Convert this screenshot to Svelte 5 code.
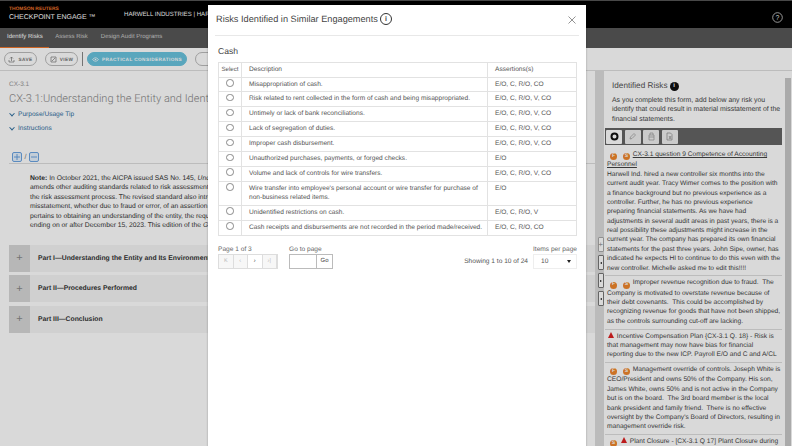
<script>
  const rows = [
    ['Misappropriation of cash.', 'E/O, C, R/O, CO'],
    ['Risk related to rent collected in the form of cash and being misappropriated.', 'E/O, C, R/O, V, CO'],
    ['Untimely or lack of bank reconciliations.', 'E/O, C, R/O, V, CO'],
    ['Lack of segregation of duties.', 'E/O, C, R/O, V, CO'],
    ['Improper cash disbursement.', 'E/O, C, R/O, V, CO'],
    ['Unauthorized purchases, payments, or forged checks.', 'E/O'],
    ['Volume and lack of controls for wire transfers.', 'E/O, C, R/O, V, CO'],
    ['Wire transfer into employee\'s personal account or wire transfer for purchase of non-business related items.', 'E/O'],
    ['Unidentified restrictions on cash.', 'E/O, C, R/O, V'],
    ['Cash receipts and disbursements are not recorded in the period made/received.', 'E/O, C, R/O, CO']
  ];
  const parts = ['Part I—Understanding the Entity and Its Environment', 'Part II—Procedures Performed', 'Part III—Conclusion'];
  const noteLines = [
    ' In October 2021, the AICPA issued SAS No. 145, ',
    'amends other auditing standards related to risk assessment. The revised standard',
    'the risk assessment process. The revised standard also introduces',
    'misstatement, whether due to fraud or error, of an assertion about',
    'pertains to obtaining an understanding of the entity, the requirements',
    'ending on or after December 15, 2023. This edition of the '
  ];
</script>

<div class="page">
  <header class="top">
    <div class="brand">
      <div class="tr">THOMSON REUTERS</div>
      <div class="ce">CHECKPOINT ENGAGE ™</div>
    </div>
    <div class="client">HARWELL INDUSTRIES | HARWELL INDUSTRIES</div>
    <svg class="help" width="11" height="11" viewBox="0 0 11 11"><circle cx="5.5" cy="5.5" r="4.8" fill="none" stroke="#ddd" stroke-width=".8"/><text x="5.5" y="8" text-anchor="middle" font-size="7" fill="#ddd" font-family="Liberation Sans">?</text></svg>
  </header>
  <nav class="tabs">
    <span class="tab active">Identify Risks</span>
    <span class="tab">Assess Risk</span>
    <span class="tab">Design Audit Programs</span>
  </nav>
  <div class="toolbar">
    <span class="pill"><svg width="7" height="7" viewBox="0 0 7 7"><path d="M1 4v2h5V4M3.5 5V1M2 2.5 3.5 1 5 2.5" fill="none" stroke="#777" stroke-width=".7"/></svg>SAVE</span>
    <span class="pill"><svg width="7" height="7" viewBox="0 0 7 7"><path d="M1 1h5v5H1zM2 5l3-3" fill="none" stroke="#777" stroke-width=".7"/></svg>VIEW</span>
    <span class="sep"></span>
    <span class="pill teal"><svg width="7" height="7" viewBox="0 0 7 7"><path d="M.5 3.5Q3.5 0 6.500 3.500 3.500 7 .5 3.500Z" fill="none" stroke="#fff" stroke-width=".7"/><circle cx="3.500" cy="3.500" r=".8" fill="#fff"/></svg>PRACTICAL CONSIDERATIONS</span>
    <span class="pill"><svg width="7" height="7" viewBox="0 0 7 7"><path d="M1 4v2h5V4M3.5 5V1" fill="none" stroke="#777" stroke-width=".7"/></svg>EXPORT</span>
  </div>
  <div class="work">
    <main class="main">
      <div class="crumb">CX-3.1</div>
      <h1>CX-3.1:Understanding the Entity and Identifying Risks</h1>
      <div class="link"><span class="chev"></span>Purpose/Usage Tip</div>
      <div class="link"><span class="chev"></span>Instructions</div>
      <div class="expand">
        <svg class="box" width="10" height="10" viewBox="0 0 10 10"><rect x=".5" y=".5" width="9" height="9" rx="1.500"/><path d="M5 2v6M2 5h6"/></svg>
        <span class="slash">/</span>
        <svg class="box" width="10" height="10" viewBox="0 0 10 10"><rect x=".5" y=".5" width="9" height="9" rx="1.500"/><path d="M2 5h6"/></svg>
      </div>
      <div class="note">
        {#each noteLines as line, i}
          <div>{#if i === 0}<b>Note:</b>{/if}{line}{#if i === 0}<i>Understanding</i>{/if}{#if i === 5}<i>Guide</i>{/if}</div>
        {/each}
      </div>
      <div class="parts">
        {#each parts as p}
          <div class="part"><span class="plus">+</span><span class="ptitle">{p}</span></div>
        {/each}
      </div>
    </main>
    <div class="split">
      <span class="sbtn wide">+</span>
      <span class="sbtn"><i class="tri left"></i></span>
      <span class="sbtn"><i class="tri"></i></span>
      <span class="sbtn"><i class="tri left"></i></span>
    </div>
    <aside class="side">
      <div class="stitle">Identified Risks <span class="info">i</span></div>
      <p class="intro">As you complete this form, add below any risk you<br>identify that could result in material misstatement of the<br>financial statements.</p>
      <div class="sbar">
        <span class="tool on"><svg width="9" height="9" viewBox="0 0 9 9"><circle cx="4.500" cy="4.500" r="3" fill="none" stroke="#111" stroke-width="2"/></svg></span>
        <span class="tool"><svg width="9" height="9" viewBox="0 0 9 9"><path d="M2 7l.5-2L6 1.500 7.500 3 4 6.500z" fill="none" stroke="#999" stroke-width=".7"/></svg></span>
        <span class="tool"><svg width="9" height="9" viewBox="0 0 9 9"><path d="M2 3h5v5H2zM3 3V1h3v2M2 5h5" fill="none" stroke="#999" stroke-width=".7"/></svg></span>
        <span class="tool"><svg width="9" height="9" viewBox="0 0 9 9"><path d="M2 1h3.500L7 2.500V8H2zM4 4l2 3M4 7l2-3" fill="none" stroke="#888" stroke-width=".7"/></svg></span>
      </div>
      <div class="risk first">
        <div class="h"><span class="b">F</span> <span class="b">S</span> <u>CX-3.1 question 9 Competence of Accounting</u></div>
        <u>Personnel</u><br>
        Harwell Ind. hired a new controller six months into the<br>current audit year. Tracy Wimer comes to the position with<br>a finance background but no previous experience as a<br>controller. Further, he has no previous experience<br>preparing financial statements. As we have had<br>adjustments in several audit areas in past years, there is a<br>real possibility these adjustments might increase in the<br>current year. The company has prepared its own financial<br>statements for the past three years. John Sipe, owner, has<br>indicated he expects HI to continue to do this even with the<br>new controller. Michelle asked me to edit this!!!!
      </div>
      <div class="risk">
        <div class="h"><span class="b">F</span> <span class="b">S</span> Improper revenue recognition due to fraud.&nbsp; The</div>
        Company is motivated to overstate revenue because of<br>their debt covenants.&nbsp; This could be accomplished by<br>recognizing revenue for goods that have not been shipped,<br>as the controls surrounding cut-off are lacking.
      </div>
      <div class="risk">
        <div class="h"><span class="warn"></span> Incentive Compensation Plan {'{'}CX-3.1 Q. 18{'}'} - Risk is</div>
        that management may now have bias for financial<br>reporting due to the new ICP. Payroll E/O and C and A/CL
      </div>
      <div class="risk">
        <div class="h"><span class="b">F</span> <span class="b">S</span> Management override of controls. Joseph White is</div>
        CEO/President and owns 50% of the Company. His son,<br>James White, owns 50% and is not active in the Company<br>but is on the board.&nbsp; The 3rd board member is the local<br>bank president and family friend.&nbsp; There is no effective<br>oversight by the Company's Board of Directors, resulting in<br>management override risk.
      </div>
      <div class="risk">
        <div class="h"><span class="b">S</span> <span class="warn"></span> Plant Closure - [CX-3.1 Q 17] Plant Closure during</div>
      </div>
    </aside>
    <div class="scroll"><span class="thumb"></span></div>
  </div>
  <div class="backdrop"></div>
  <section class="modal">
    <div class="mhead">
      <span>Risks Identified in Similar Engagements</span>
      <span class="minfo">i</span>
      <svg class="close" width="8" height="8" viewBox="0 0 8 8"><path d="M.5.500l7 7M7.500.500l-7 7" stroke="#777" stroke-width=".8"/></svg>
    </div>
    <div class="mbody">
      <div class="cash">Cash</div>
      <table>
        <colgroup><col class="c1"><col class="c2"><col class="c3"></colgroup>
        <thead>
          <tr><th class="sel">Select</th><th>Description</th><th>Assertions(s)</th></tr>
        </thead>
        <tbody>
          {#each rows as r}
            <tr>
              <td class="sel"><span class="radio"></span></td>
              <td>{r[0]}</td>
              <td>{r[1]}</td>
            </tr>
          {/each}
        </tbody>
      </table>
      <div class="foot">
        <div class="fgroup">
          <div class="flabel">Page 1 of 3</div>
          <div class="pager">
            <span class="dis">K</span><span class="dis">‹</span><span>›</span><span class="dis">›|</span>
          </div>
        </div>
        <div class="fgroup goto">
          <div class="flabel">Go to page</div>
          <div class="goinput"><span class="field"></span><span class="go">Go</span></div>
        </div>
        <div class="showing">Showing 1 to 10 of 24</div>
        <div class="fgroup ipp">
          <div class="flabel">Items per page</div>
          <div class="select"><span>10</span><i></i></div>
        </div>
      </div>
    </div>
  </section>
</div>

<style>
  :global(body) { margin: 0; background: #fff; }
  .page {
    position: relative; width: 792px; height: 446px; overflow: hidden;
    font-family: "Liberation Sans", Arial, sans-serif; color: #333; font-size: 7.300px;
    display: flex; flex-direction: column; text-rendering: geometricPrecision;
  }
  .top {
    height: 28px; flex: none; background: #000; border-top: 1px solid #555; box-sizing: border-box;
    display: flex; align-items: center; padding: 0 0 0 9px; color: #fff;
  }
  .brand { width: 115px; }
  .tr { color: #f0772b; font-size: 4.900px; font-weight: bold; line-height: 6px; }
  .ce { font-size: 7px; line-height: 9px; }
  .client { font-size: 6.100px; white-space: nowrap; }
  .help { position: absolute; right: 9px; top: 12px; }
  .tabs {
    height: 20px; flex: none; background: #585858; display: flex; color: #ccc; font-size: 6px;
  }
  .tab { padding: 0 6.500px; line-height: 19px; }
  .tab:first-child { padding: 0 6px 0 7px; }
  .tab.active { color: #fff; box-shadow: inset 0 -1px 0 #f0772b; }
  .toolbar {
    height: 23px; flex: none; box-sizing: border-box; border-bottom: 1px solid #ddd; display: flex;
    align-items: center; padding: 0 4px; gap: 8px;
  }
  .pill {
    height: 14px; box-sizing: border-box; border: 1px solid #bbb; border-radius: 7px; display: flex;
    align-items: center; justify-content: center; gap: 3px; font-size: 4.700px; letter-spacing: .4px;
    font-weight: bold; color: #777; width: 33px; background: #fff;
  }
  .pill.teal { width: 100px; background: #69c3de; border-color: #69c3de; color: #fff; }
  .pill:last-child { width: 60px; }
  .sep { width: 1px; height: 14px; background: #888; margin: 0 -4px 0 -4px; }
  .work { flex: 1; min-height: 0; display: flex; }
  .main { width: 595px; flex: none; box-sizing: border-box; padding: 10px 0 0 9px; white-space: nowrap; overflow: hidden; }
  .crumb { font-size: 6.500px; color: #999; line-height: 8px; }
  h1 { margin: 2px 0 0; font-family: Roboto, sans-serif; font-weight: 300; font-size: 11px; color: #888; line-height: 15px; }
  .link { color: #2f6f9f; font-size: 6.600px; line-height: 14px; display: flex; align-items: center; gap: 2px; }
  h1 + .link { margin-top: 2px; }
  .chev { width: 3px; height: 3px; border-right: 1px solid #2f6f9f; border-bottom: 1px solid #2f6f9f; transform: rotate(45deg) translate(-1px,-1px); margin: 0 2px 0 1px; }
  .expand {
    margin-top: 16px; height: 12px; box-sizing: border-box; border-bottom: 1px solid #ddd; display: flex; align-items: flex-start; gap: 2.500px; padding-left: 3px;
  }
  .box { fill: #e6f1fd; stroke: #5c9ade; stroke-width: .9; }
  .slash { color: #777; line-height: 9px; }
  .note { margin: 10px 0 0 21px; font-size: 6.750px; line-height: 9.450px; color: #333; }
  .parts { margin-top: 14px; display: flex; flex-direction: column; gap: 3.500px; }
  .part { height: 27px; background: #f5f5f5; display: flex; align-items: center; }
  .plus { width: 21px; height: 100%; background: #d8d8d8; display: flex; align-items: center; justify-content: center; color: #888; font-size: 11px; }
  .ptitle { margin-left: 8px; font-weight: bold; font-size: 6.800px; color: #333; }
  .split { width: 9px; flex: none; background: #dcdcdc; display: flex; flex-direction: column; align-items: center; padding-top: 166px; gap: 3px; box-sizing: border-box; }
  .sbtn {
    position: relative; left: 1px; width: 6px; height: 15px; box-sizing: border-box; background: #fff; border: 1px solid #777; border-radius: 1px;
    display: flex; align-items: center; justify-content: center; font-size: 8px; color: #999;
  }
  .sbtn.wide { border-color: #aaa; }
  .tri { border-left: 2px solid #111; border-top: 1.500px solid transparent; border-bottom: 1.500px solid transparent; }
  .tri.left { transform: rotate(180deg); }
  .side { width: 181px; flex: none; box-sizing: border-box; padding: 0 3px 0 1px; white-space: nowrap; overflow: hidden; }
  .stitle { font-size: 8.200px; color: #555; margin: 9px 0 0 7px; line-height: 12px; display: flex; align-items: center; gap: 2px; }
  .info { width: 9px; height: 9px; border-radius: 50%; background: #111; color: #fff; font-size: 6px; font-weight: bold; display: inline-flex; align-items: center; justify-content: center; }
  .intro { margin: 4px 0 0 7px; font-size: 6.900px; line-height: 9.400px; color: #444; }
  .sbar { margin-top: 4px; height: 17px; background: #646464; display: flex; align-items: center; padding-left: 1px; gap: 2.500px; }
  .tool { width: 16px; height: 14px; background: #efefef; border-radius: 1px; display: flex; align-items: center; justify-content: center; }
  .tool.on { background: #fff; }
  .risk { padding: 2px 1px 2.500px 2px; font-size: 6.650px; line-height: 9.380px; color: #444; border-bottom: 1px solid #ddd; }
  .risk.first { padding-top: 5px; }
  .risk:last-child { border: 0; }
  .risk u { color: #444; }
  .b {
    display: inline-flex; width: 7px; height: 7px; border-radius: 50%; background: #f0862c; color: #fff; font-size: 5px;
    align-items: center; justify-content: center; margin: 0 1px 0 3px; font-weight: bold; vertical-align: -1px;
  }
  .warn {
    display: inline-block; width: 0; height: 0; margin: 0 1px 0 1px;
    border-left: 3.500px solid transparent; border-right: 3.500px solid transparent; border-bottom: 6px solid #d22;
  }
  .scroll { width: 7px; flex: none; padding-top: 7px; box-sizing: border-box; display: flex; flex-direction: column; }
  .thumb { display: block; flex: 1; width: 6px; background: #c8c8c8; }
  .backdrop { position: absolute; inset: 0; background: rgba(0,0,0,.15); }
  .modal {
    position: absolute; left: 208px; top: 5px; width: 378px; height: 460px; background: #fff; box-sizing: border-box;
    box-shadow: 0 0 2px rgba(0,0,0,.3);
  }
  .mhead {
    margin: 0 7px 0 7px; height: 31px; box-sizing: border-box; border-bottom: 1px solid #e8e8e8; position: relative;
    display: flex; align-items: center; gap: 2px; font-size: 9.200px; color: #444; padding: 0 0 2px 1px;
  }
  .minfo { width: 10px; height: 10px; border: 1px solid #333; border-radius: 50%; font-size: 7px; display: flex; align-items: center; justify-content: center; font-weight: bold; }
  .close { position: absolute; right: 3px; top: 11px; }
  .mbody { padding: 0 9px 0 10px; }
  .cash { font-size: 8.600px; line-height: 11px; margin-top: 10px; color: #444; }
  table { width: 359px; margin-top: 5px; border-collapse: collapse; table-layout: fixed; border: 1px solid #ddd; }
  .c1 { width: 23px; }
  .c2 { width: 246px; }
  th, td { border: 1px solid #e2e2e2; font-size: 6.600px; font-weight: normal; color: #555; padding: 2.050px 3px 2.050px 7px; line-height: 9.400px; text-align: left; vertical-align: top; }
  th.sel { padding: 2.050px 0; text-align: center; font-size: 6.100px; }
  td.sel { padding: 1.500px 0; text-align: center; }
  .radio { display: inline-block; width: 5.500px; height: 5.500px; border: 1px solid #888; border-radius: 50%; }
  .foot { display: flex; margin-top: 9px; align-items: flex-end; font-size: 6.600px; color: #666; }
  .fgroup { display: flex; flex-direction: column; gap: 0; }
  .flabel { line-height: 9px; }
  .pager { display: flex; height: 15px; box-sizing: border-box; border: 1px solid #ddd; }
  .pager span { width: 14.500px; box-sizing: border-box; border-right: 1px solid #ddd; display: flex; align-items: center; justify-content: center; color: #444; font-size: 5.500px; }
  .pager span.dis { background: #f7f7f7; color: #bbb; }
  .goto { margin-left: 11px; }
  .goinput { display: flex; height: 15px; box-sizing: border-box; border: 1px solid #bbb; width: 44px; }
  .field { flex: 1; }
  .go { width: 15px; border-left: 1px solid #bbb; display: flex; align-items: center; justify-content: center; font-size: 6px; color: #444; }
  .showing { margin-left: auto; margin-right: 5px; line-height: 14px; color: #555; }
  .ipp { width: 44px; white-space: nowrap; }
  .select { height: 15px; box-sizing: border-box; border: 1px solid #eee; display: flex; align-items: center; justify-content: space-between; padding: 0 5px 0 7px; color: #555; }
  .select i { border-top: 3px solid #222; border-left: 2.500px solid transparent; border-right: 2.500px solid transparent; }
</style>
